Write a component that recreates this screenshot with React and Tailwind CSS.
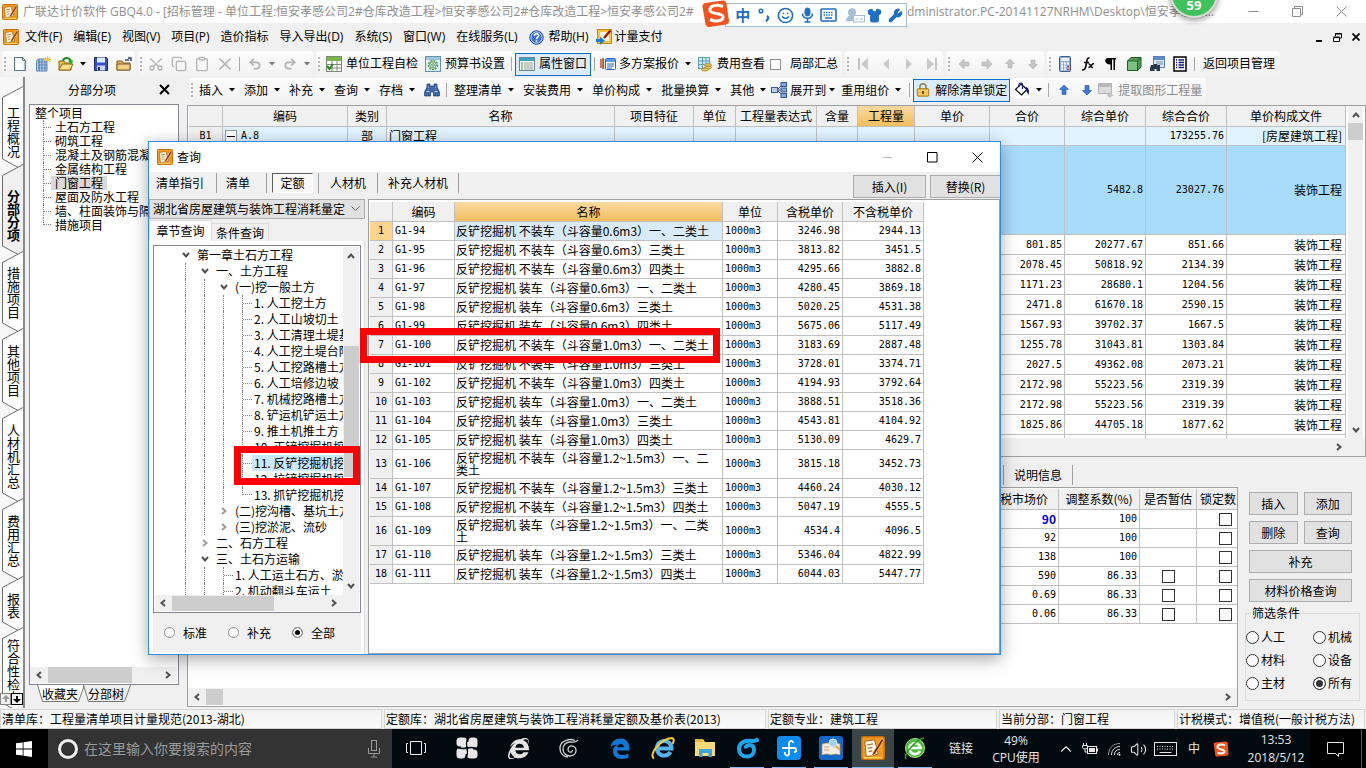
import React from "react";
import {
  Scissors, Copy, Clipboard, X, Undo2, Redo2, Mic, Keyboard, Smile, Shirt, Wrench,
  Volume2, ChevronUp, Minus, UserRound,
} from "lucide-react";
import { FaInternetExplorer } from "react-icons/fa";

/* ---------- small drawings ---------- */

function AppIcon({ size = 16 }) {
  return (
    <svg width={size} height={size} viewBox="0 0 16 16" className="shrink-0">
      <rect x="0.5" y="0.5" width="15" height="15" rx="1" fill="#f39a1d" stroke="#c96f0c" />
      <path d="M2.5 3.5 9 2.5l2.5 9.5-8 2z" fill="#fff8e2" stroke="#9b5a14" strokeWidth=".6" />
      <path d="M4 6l4-.8M4.5 8.2l3-.6M5 10.4l2.5-.5" stroke="#a8703a" strokeWidth=".8" />
      <path d="M14 1.5 8 11l-.8 2.4L9.4 12 15 3z" fill="#7b2a10" stroke="#ffe2a8" strokeWidth=".4" />
      <path d="M2 14.5h12" stroke="#ffd65e" />
    </svg>
  );
}

const I = ({ children, w = 16 }) => (
  <svg width={w} height={w} viewBox="0 0 16 16" fill="none" className="shrink-0">{children}</svg>
);

const icons = {
  doc: <I><path d="M2.500 1.500h8l3 3v10h-11z" fill="#fff" stroke="#5d7286" /><path d="M10.500 1.500v3h3" stroke="#5d7286" /><path d="M12.500 6v8" stroke="#a9c3dc" strokeWidth="1.500" /></I>,
  grid: <I><path d="M1.500 4.500 4 3v12H1.500zM4 3h8v12H4z" fill="#b7d0ec" stroke="#5c86b5" /><path d="M4 6h8M4 9h8M4 12h8M7 3v12M10 3v12" stroke="#4a76a8" strokeWidth=".8" /><path d="M12.500 0v7M9 3.500h7M10 1l5 5M15 1l-5 5" stroke="#f4c531" /></I>,
  open: <I><path d="M1 14V5h5l1 2h6v7z" fill="#f2c14e" stroke="#8a6410" /><path d="M1 14l3-6h11l-3 6z" fill="#ffe08a" stroke="#8a6410" /><path d="M5 5c1-4 6-4 8 0" stroke="#1e8a1e" strokeWidth="2" /><path d="M10 4.500h5.500L13 9z" fill="#2eb02e" /></I>,
  save: <I><path d="M1.500 1.500h12l1 1v12h-13z" fill="#3c4fc0" stroke="#1d2a7c" /><rect x="4" y="1.500" width="8" height="5" fill="#e4ebf8" /><rect x="4" y="9.500" width="8" height="5" fill="#cfd8ea" /><rect x="5" y="11" width="2" height="3.500" fill="#1d2a7c" /></I>,
  folder: <I><path d="M1 14V5h5l1.500 2H14v7z" fill="#dfb566" stroke="#7e5c1b" /><path d="M1 14V8h13v6z" fill="#f3cf85" stroke="#7e5c1b" /><path d="M9 4h4M12 2l3 0 0 3" stroke="#33496f" strokeWidth="1.500" /></I>,
  check: <I><rect x=".5" y=".5" width="15" height="15" fill="#fff" stroke="#7d8a7a" /><rect x="1" y="1" width="14" height="4" fill="#7ab648" /><path d="M1 8.500h14M1 12h14M6 5v10M11 5v10" stroke="#7d8a7a" /><path d="M1 10l2.500 3L7 8" stroke="#2d8b1d" strokeWidth="2" /></I>,
  gear: <I><rect x=".5" y=".5" width="15" height="15" fill="#dff0f8" stroke="#6692ab" /><rect x="1" y="1" width="14" height="3" fill="#9cc6de" /><circle cx="8" cy="9" r="4.500" stroke="#5e9b55" strokeWidth="1.500" strokeDasharray="2 1" /><circle cx="8" cy="9" r="3.200" stroke="#5e9b55" /><circle cx="8" cy="9" r="1.300" stroke="#5e9b55" /></I>,
  props: <I><rect x=".5" y="1.500" width="15" height="13" fill="#f4f6ee" stroke="#6d8595" /><rect x="1" y="2" width="14" height="3" fill="#37a3bd" /><path d="M5 7h9M5 9h9M5 11h9M5 13h9" stroke="#9aa39a" /><path d="M2 7h2M2 9h2M2 11h2M2 13h2" stroke="#3e9d55" /></I>,
  multi: <I><path d="M1 3v9M3 2v11" stroke="#d23b2b" strokeWidth="1.400" /><path d="M3.500 3v10" stroke="#2c9a39" strokeWidth="1.400" /><rect x="5.500" y="2.500" width="10" height="11" rx="1" fill="#fff" stroke="#2368c9" /><rect x="6" y="3" width="9" height="3" fill="#5b9be6" /><path d="M7 8h7M7 10h7M7 12h5" stroke="#2368c9" /></I>,
  fee: <I><rect x="1.500" y="1.500" width="11" height="11" fill="#cfe9f3" stroke="#5a9fbc" /><path d="M2 5h10M2 8.500h10M5.500 2v10M9 2v10" stroke="#5a9fbc" /><ellipse cx="11" cy="9" rx="3.500" ry="1.500" fill="#e9c25a" stroke="#97701a" strokeWidth=".6" /><ellipse cx="11" cy="11.500" rx="3.500" ry="1.500" fill="#e9c25a" stroke="#97701a" strokeWidth=".6" /><ellipse cx="8" cy="13.500" rx="3.500" ry="1.500" fill="#e9c25a" stroke="#97701a" strokeWidth=".6" /></I>,
  first: <I><path d="M4 2v12" stroke="#c4c4c4" strokeWidth="2" /><path d="M13 2v12L6 8z" fill="#c9c9c9" /></I>,
  prev: <I><path d="M11 2.500v11L5 8z" fill="#c9c9c9" /></I>,
  next: <I><path d="M5 2.500v11l6-5.500z" fill="#c9c9c9" /></I>,
  last: <I><path d="M12 2v12" stroke="#c4c4c4" strokeWidth="2" /><path d="M3 2v12l7-6z" fill="#c9c9c9" /></I>,
  left: <I><path d="M3 8l5-5v3h5v4H8v3z" fill="#c6c6c6" stroke="#b0b0b0" strokeWidth=".6" /></I>,
  right: <I><path d="M13 8 8 3v3H3v4h5v3z" fill="#c6c6c6" stroke="#b0b0b0" strokeWidth=".6" /></I>,
  up: <I><path d="M8 3l4.500 4.500H10V12H6V7.500H3.500z" fill="#c6c6c6" stroke="#b0b0b0" strokeWidth=".6" /></I>,
  down: <I><path d="M8 13l4.500-4.500H10V4H6v4.500H3.500z" fill="#c6c6c6" stroke="#b0b0b0" strokeWidth=".6" /></I>,
  upBlue: <I><path d="M8 3l4.500 4.500H10V12.500H6V7.500H3.500z" fill="#3f78e0" stroke="#2450a8" strokeWidth=".6" /></I>,
  downBlue: <I><path d="M8 13l4.500-4.500H10V3.500H6v5H3.500z" fill="#3f78e0" stroke="#2450a8" strokeWidth=".6" /></I>,
  calc: <I><rect x="2.500" y=".5" width="11" height="15" rx="1" fill="#8fb0dc" stroke="#3f5f92" /><rect x="4" y="2" width="8" height="3" fill="#e8f2ff" /><path d="M4 7.500h8M4 10.500h8M4 13.300h8" stroke="#fff" strokeWidth="1.800" strokeDasharray="2 1" /><path d="M10 10.500h2M10 13.300h2" stroke="#d1483b" strokeWidth="1.800" /></I>,
  fx: <I><path d="M9.500 2C7 1.500 7 4 6.300 8S5 14.500 2 14M4 6.500h5" stroke="#000" strokeWidth="1.600" /><path d="M8.500 8c2-1 2 4 4.500 3.500M14 7.500c-2.500 0-3 4-5.500 4" stroke="#000" strokeWidth="1.500" /></I>,
  para: <I><path d="M3 2h10v1.500h-1V14h-1.500V3.500H9V14H7.500V8.500C1 8.500 1 2 5 2z" fill="#000" /></I>,
  cube: <I><path d="M1.500 5 5 1.500h10V11l-3.500 3.500h-10z" fill="#4f9a55" stroke="#1f5b28" /><path d="M1.500 5h10v9.500M11.500 5 15 1.500" stroke="#1f5b28" /><path d="M2 5.500h9V14H2z" fill="#7cc381" /></I>,
  find: <I><rect x="4.500" y=".5" width="11" height="11" fill="#dfeafa" stroke="#5b7db8" /><rect x="5" y="1" width="10" height="3" fill="#5b8ad6" /><path d="M7 6h7M7 8h7" stroke="#6c87b5" /><path d="M2 9h3v-1h3v1h3v6H7.500v-2h-2v2H1v-3z" fill="#29394f" /></I>,
  list: <I><rect x="2" y="1" width="12" height="14" fill="#fff" stroke="#000" strokeWidth="1.500" /><path d="M4 4h1M4 6.500h1M4 9h1M4 11.500h1" stroke="#00f" strokeWidth="1.300" /><path d="M6.500 4H12M6.500 6.500H12M6.500 9H12M6.500 11.500H12" stroke="#111a7a" strokeWidth="1.300" /></I>,
  bino: <I><path d="M3 2h3v2h4V2h3v3l2.500 5v4h-6v-4h-3v4h-6v-4L3 5z" fill="#3e66a8" stroke="#1f3b6e" strokeWidth=".7" /><path d="M2.500 9.500h3M10.500 9.500h3M4 5h1M11 5h1" stroke="#b9d2f5" /></I>,
  expand: <I><path d="M6 8l5-5M6 8h5M6 8l5 5" stroke="#33496f" /><rect x=".5" y="5.500" width="6" height="5" fill="#b9d0f2" stroke="#38589a" /><rect x="10" y=".5" width="5.500" height="4" fill="#7fa6e4" stroke="#38589a" /><rect x="10" y="6" width="5.500" height="4" fill="#7fa6e4" stroke="#38589a" /><rect x="10" y="11.500" width="5.500" height="4" fill="#7fa6e4" stroke="#38589a" /></I>,
  lock: <I w={14}><path d="M4.500 7V4.500a3.500 3.500 0 0 1 7 0V7" stroke="#9b8a60" strokeWidth="2" /><rect x="1.500" y="6.500" width="13" height="8.500" rx="1" fill="#f4bd42" stroke="#a06c0c" /><path d="M2 9h12M2 12.500h12" stroke="#ffe39a" /><path d="M8 9v3.500" stroke="#5b3c05" strokeWidth="2" /></I>,
  bucket: <I><rect width="16" height="16" fill="#fff" /><path d="M1.500 7.500 7 2l6 5.500-5.500 5.500z" fill="#fff" stroke="#000" strokeWidth="1.200" /><path d="M5 5V2.500c0-2 3.500-2 3.500 0V7" stroke="#10107a" strokeWidth="1.200" /><path d="M12 5c3 1 3.500 4 2.500 8-1-1.500-2-4-2.500-5z" fill="#10107a" /></I>,
  extract: <I><rect x=".5" y="1.500" width="13" height="10" fill="#dcdcdc" stroke="#b5b5b5" /><rect x="1" y="2" width="12" height="3" fill="#b8b8b8" /><path d="M6 8c0 4 3 4 5 4v-2.500l4.500 4-4.500 2.500z" fill="#c4c4c4" /></I>,
  help: <I w={15}><circle cx="8" cy="8" r="7.200" fill="#3a70d6" stroke="#204a9c" /><circle cx="8" cy="8" r="6" stroke="#cfe0ff" /><path d="M5.800 6.200c0-3 4.600-2.800 4.400 0C10.100 7.600 8 7.800 8 9.800M8 11v1.600" stroke="#fff" strokeWidth="1.700" /></I>,
  pay: <I><rect x="1.500" y=".5" width="14" height="14" fill="#ffc53a" stroke="#cf8a10" /><rect x="4" y="3" width="9" height="9" fill="#fff6dd" /><path d="M14.500 1.500 8 9" stroke="#8c1a10" strokeWidth="2.400" /><path d="M0 10h4V7.500l5 4.200-5 4V13H0z" fill="#1c7fd0" /></I>,
};

function Chev({ dir, light }) {
  const d = { left: "M7 2 3.500 5 7 8", right: "M3 2l3.500 3L3 8", up: "M2 7l3-3.500L8 7", down: "M2 3l3 3.500L8 3" }[dir];
  return (
    <svg width="10" height="10" viewBox="0 0 10 10" className="shrink-0">
      <path d={d} fill="none" stroke={light ? "#a0a0a0" : "#505050"} strokeWidth="2" />
    </svg>
  );
}

const Caret = ({ gray }) => (
  <svg width="6" height="4" viewBox="0 0 6 4"><path d="M0 0h6L3 3.500z" fill={gray ? "#777" : "#000"} /></svg>
);

const Grip = () => (
  <span className="flex w-[6px] shrink-0 flex-col items-center gap-[2px]">
    {[0, 1, 2, 3].map((i) => <span key={i} className="h-[2px] w-[2px] bg-[#b4b4b4]" />)}
  </span>
);
const Sep = () => <span className="flex w-[7px] shrink-0 justify-center"><span className="h-[14px] w-px bg-[#a8a8a8]" /></span>;
const Slot = ({ label, children }) => (
  <button type="button" aria-label={label} className="flex h-5 w-[23px] shrink-0 items-center justify-center">{children}</button>
);
const CaretSlot = ({ gray }) => <span className="flex w-3 shrink-0 justify-center"><Caret gray={gray} /></span>;
const Group = ({ children }) => (
  <div className="flex h-full items-center rounded-[3px] bg-linear-to-b from-[#fdfdfd] to-[#f1f1f1]">{children}</div>
);

function Drop({ children }) {
  return (
    <button type="button" className="flex h-5 shrink-0 items-center whitespace-nowrap pl-1">
      {children}
      <span className="flex w-[17px] justify-center"><Caret /></span>
    </button>
  );
}

function PushButton({ children, className = "" }) {
  return (
    <button type="button" className={"flex h-[23px] items-center justify-center whitespace-nowrap border border-[#adadad] bg-[#e1e1e1] " + className}>
      {children}
    </button>
  );
}

/* ---------- window chrome ---------- */

function TitleBar() {
  return (
    <header className="flex h-[23px] shrink-0 items-center bg-white pl-[2px] text-[#8f8f8f]">
      <AppIcon />
      <p className="ml-[5px] w-[684px] shrink-0 overflow-hidden whitespace-nowrap">
        广联达计价软件 GBQ4.0 - [招标管理 - 单位工程:恒安孝感公司2#仓库改造工程&gt;恒安孝感公司2#仓库改造工程&gt;恒安孝感公司2#
      </p>
      <p className="ml-[200px] shrink-0 whitespace-nowrap">dministrator.PC-20141127NRHM\Desktop\恒安孝感公...</p>
      <div className="ml-auto flex items-center gap-[33px] pr-[19px]">
        <button type="button" aria-label="最小化"><svg width="11" height="11" stroke="#8f8f8f"><path d="M.5 5.500h10" /></svg></button>
        <button type="button" aria-label="还原">
          <svg width="11" height="11" viewBox="0 0 11 11" fill="none" stroke="#8f8f8f"><path d="M.5 2.500h8v8h-8zM2.500 2.500v-2h8v8h-2" /></svg>
        </button>
        <button type="button" aria-label="关闭">
          <svg width="11" height="11" viewBox="0 0 11 11" fill="none" stroke="#8f8f8f"><path d="M.5.5l10 10M10.500.5l-10 10" /></svg>
        </button>
      </div>
    </header>
  );
}

function MenuBar() {
  const menus = ["文件(F)", "编辑(E)", "视图(V)", "项目(P)", "造价指标", "导入导出(D)", "系统(S)", "窗口(W)", "在线服务(L)"];
  return (
    <nav className="flex h-7 shrink-0 items-center gap-[11px] pl-[3px]">
      <div className="flex items-center gap-[6px]"><AppIcon /><button type="button">{menus[0]}</button></div>
      {menus.slice(1).map((m) => <button type="button" key={m} className="whitespace-nowrap">{m}</button>)}
      <button type="button" className="flex items-center gap-[5px] whitespace-nowrap">{icons.help}帮助(H)</button>
      <button type="button" className="-ml-1 flex items-center gap-[3px] whitespace-nowrap">{icons.pay}计量支付</button>
      <div className="ml-auto flex items-center gap-[10px] pr-[6px]">
        <button type="button" aria-label="最小化子窗口"><svg width="8" height="9"><path d="M1 8h6" stroke="#000" strokeWidth="2" /></svg></button>
        <button type="button" aria-label="还原子窗口">
          <svg width="9" height="9" viewBox="0 0 9 9" fill="none" stroke="#000"><path d="M.5 4.500v4h6v-4zM.5 4h6M2.500 3V.5h6v4.500H7M2.500 1h6" /></svg>
        </button>
        <button type="button" aria-label="关闭子窗口">
          <svg width="8" height="8" viewBox="0 0 8 8" stroke="#000" strokeWidth="1.700"><path d="M.5.5l7 7M7.500.5l-7 7" /></svg>
        </button>
      </div>
    </nav>
  );
}

function MainToolbar() {
  const gray = { size: 16, color: "#b4b4b4", strokeWidth: 2 };
  return (
    <div className="flex h-[26px] shrink-0 items-center gap-[3px] pl-[2px]">
      <Group>
        <Grip />
        <Slot label="新建">{icons.doc}</Slot><Slot label="新建工程">{icons.grid}</Slot><Slot label="打开">{icons.open}</Slot>
        <CaretSlot /><Slot label="保存">{icons.save}</Slot><Slot label="关闭工程">{icons.folder}</Slot>
      </Group>
      <Group>
        <Grip />
        <Slot label="剪切"><Scissors {...gray} className="-rotate-90" /></Slot><Slot label="复制"><Copy {...gray} /></Slot>
        <Slot label="粘贴"><Clipboard {...gray} /></Slot><Slot label="删除"><X {...gray} size={20} /></Slot>
        <Sep />
        <Slot label="撤销"><Undo2 {...gray} size={14} strokeWidth={3} /></Slot><CaretSlot gray />
        <Slot label="重做"><Redo2 {...gray} size={14} strokeWidth={3} /></Slot><CaretSlot gray />
      </Group>
      <Group>
        <Grip />
        <button type="button" className="flex items-center gap-1 pl-1 whitespace-nowrap">{icons.check}单位工程自检</button>
        <button type="button" className="mr-[3px] flex items-center gap-1 pl-[7px] whitespace-nowrap">{icons.gear}预算书设置</button>
        <Sep />
        <button type="button" className="flex h-[23px] items-center gap-1 border border-[#0a6cc9] bg-[#dcebf8] px-[3px] whitespace-nowrap">{icons.props}属性窗口</button>
        <Sep />
        <button type="button" className="flex items-center gap-[3px] pl-[2px] whitespace-nowrap">{icons.multi}多方案报价</button>
        <span className="flex w-[18px] justify-center"><Caret /></span>
        <button type="button" className="flex items-center gap-1 whitespace-nowrap">{icons.fee}费用查看</button>
        <label className="flex items-center gap-[9px] pr-1 pl-[5px] whitespace-nowrap">
          <input type="checkbox" className="h-[11px] w-[11px] appearance-none border border-[#909090] bg-white" />局部汇总
        </label>
      </Group>
      <Group>
        <Grip />
        <Slot label="首行">{icons.first}</Slot><Slot label="上一行">{icons.prev}</Slot><Slot label="下一行">{icons.next}</Slot><Slot label="末行">{icons.last}</Slot>
      </Group>
      <Group>
        <Grip />
        <Slot label="左移">{icons.left}</Slot><Slot label="右移">{icons.right}</Slot><Slot label="上移">{icons.up}</Slot><Slot label="下移">{icons.down}</Slot>
      </Group>
      <Group>
        <Grip />
        <Slot label="计算器">{icons.calc}</Slot><Slot label="函数">{icons.fx}</Slot><Slot label="段落">{icons.para}</Slot>
        <Slot label="图元">{icons.cube}</Slot><Slot label="查找">{icons.find}</Slot><Slot label="列表">{icons.list}</Slot>
        <Sep />
        <button type="button" className="px-[5px] whitespace-nowrap">返回项目管理</button>
      </Group>
    </div>
  );
}

function EditToolbar() {
  return (
    <div className="flex h-[27px] shrink-0 items-center pb-[3px] pl-[2px]">
      <Group>
        <Grip />
        {["插入", "添加", "补充", "查询", "存档"].map((t) => <Drop key={t}>{t}</Drop>)}
        <Slot label="查找">{icons.bino}</Slot>
        <Sep />
        {["整理清单", "安装费用", "单价构成", "批量换算", "其他"].map((t) => <Drop key={t}>{t}</Drop>)}
        <button type="button" className="flex items-center gap-[3px] whitespace-nowrap">{icons.expand}展开到</button>
        <span className="flex w-[11px] justify-center"><Caret /></span>
        <Drop>重用组价</Drop>
        <Sep />
        <button type="button" className="flex h-[23px] items-center gap-[5px] border border-[#0a6cc9] bg-[#dcebf8] px-[2px] whitespace-nowrap">{icons.lock}解除清单锁定</button>
        <Slot label="填充">{icons.bucket}</Slot><CaretSlot />
        <Sep />
        <Slot label="上移">{icons.upBlue}</Slot><Slot label="下移">{icons.downBlue}</Slot>
        <button type="button" className="flex items-center gap-1 pr-1 whitespace-nowrap text-[#8a8a8a]">{icons.extract}提取图形工程量</button>
      </Group>
    </div>
  );
}

/* ---------- left side ---------- */

const sideTabs = [
  ["工程概况", "h-[78px] pt-[14px]", 78], ["分部分项", "h-[87px] pt-4 font-bold", 87], ["措施项目", "h-[77px] pt-[7px]", 77],
  ["其他项目", "h-[79px] pt-[7px]", 79], ["人材机汇总", "h-[91px] pt-2", 91], ["费用汇总", "h-[78px] pt-2", 78],
  ["报表", "h-[51px] pt-2", 51], ["符合性检查", "h-[81px] pt-2", 81],
];

function SideTabs() {
  return (
    <aside className="relative flex w-[25px] shrink-0 flex-col overflow-hidden border-r-2 border-[#8a8a8a] bg-[#f7f7f7] pt-[9px]">
      {sideTabs.map(([t, cls, h], i) => (
        <button type="button" key={t} className={"relative flex shrink-0 justify-center pl-[3px] text-[13px] leading-[14px] " + cls}>
          <svg width="23" height={h + 6} className="absolute top-0 left-0" fill={i === 1 ? "#f0f0f0" : "#fff"}>
            <path d={`M23 .5 2.500 11.500V${h - 5}L13.500 ${h + 1}L23 ${h + 6}`} stroke="#6d6d6d" />
          </svg>
          <span className="relative whitespace-nowrap [writing-mode:vertical-rl]">{t}</span>
        </button>
      ))}
      <div className="absolute bottom-[3px] left-0 flex">
        <button type="button" aria-label="上一页" className="flex h-3 w-[11px] items-center justify-center border border-[#888] bg-[#f0f0f0]">
          <svg width="8" height="8"><path d="M4 0l4 4H5v3H3V4H0z" fill="#999" /></svg>
        </button>
        <button type="button" aria-label="下一页" className="flex h-3 w-3 items-center justify-center border border-black bg-[#f0f0f0]">
          <svg width="8" height="8"><path d="M4 8l4-4H5V1H3v3H0z" fill="#000" /></svg>
        </button>
      </div>
    </aside>
  );
}

function PartsPanel() {
  const items = ["土石方工程", "砌筑工程", "混凝土及钢筋混凝土工程", "金属结构工程", "门窗工程", "屋面及防水工程", "墙、柱面装饰与隔断工程", "措施项目"];
  return (
    <section className="flex w-[162px] shrink-0 flex-col pr-2 pl-1">
      <div className="flex h-[27px] shrink-0 items-center justify-between pr-[9px] pb-[2px] pl-[39px]">
        <h2>分部分项</h2>
        <button type="button" aria-label="关闭面板">
          <svg width="11" height="11" viewBox="0 0 11 11" stroke="#000" strokeWidth="2"><path d="M1 1l9 9M10 1l-9 9" /></svg>
        </button>
      </div>
      <div className="flex min-h-0 flex-1 flex-col border border-[#828790] bg-white">
        <ul className="flex-1 overflow-hidden pt-px leading-[14px] whitespace-nowrap">
          <li className="pl-[5px]">整个项目</li>
          {items.map((t, i) => (
            <li key={t} className="flex h-[14px] pl-[13px]">
              <span className={"flex w-2 shrink-0 items-center border-l border-dotted border-[#808080] " + (i === items.length - 1 ? "h-[7px] items-end" : "")}>
                <span className="flex-1 border-t border-dotted border-[#808080]" />
              </span>
              <span className={i === 4 ? "bg-[#d9d9d9] px-1" : "px-1"}>{t}</span>
            </li>
          ))}
        </ul>
        <div className="mr-px mb-px flex h-4 items-center bg-[#f0f0f0] pl-1">
          <Chev dir="left" /><span className="ml-1 h-full w-[84px] bg-[#cdcdcd]" /><span className="flex-1" /><Chev dir="right" /><span className="w-1" />
        </div>
      </div>
      <div className="flex h-[23px] shrink-0 items-start pl-2">
        {["收藏夹", "分部树"].map((t, i) => (
          <button type="button" key={t} className="relative flex h-[17px] w-[46px] items-center justify-center">
            <svg width="48" height="17" className="absolute top-0 left-0" fill={i ? "#f0f0f0" : "#fff"} stroke="#777"><path d="M.5 0 5.500 16.500H41.500L47.500 0" /></svg>
            <span className="relative">{t}</span>
          </button>
        ))}
      </div>
    </section>
  );
}

/* ---------- main table ---------- */

const cell = "overflow-hidden border-r border-b border-[#c0c0c0] p-0 whitespace-nowrap";
const num = " pr-[2px] text-right font-['DejaVu_Sans_Mono',monospace] text-[10px]";

const priceRows = [
  ["801.85", "20277.67", "851.66"], ["2078.45", "50818.92", "2134.39"], ["1171.23", "28680.1", "1204.56"],
  ["2471.8", "61670.18", "2590.15"], ["1567.93", "39702.37", "1667.5"], ["1255.78", "31043.81", "1303.84"],
  ["2027.5", "49362.08", "2073.21"], ["2172.98", "55223.56", "2319.39"], ["2172.98", "55223.56", "2319.39"],
  ["1825.86", "44705.18", "1877.62"],
];

function MainTable() {
  const heads = ["", "编码", "类别", "名称", "项目特征", "单位", "工程量表达式", "含量", "工程量", "单价", "合价", "综合单价", "综合合价", "单价构成文件"];
  return (
    <div className="flex h-[352px] shrink-0 flex-col border border-[#a0a0a0] bg-white">
      <div className="flex min-h-0 flex-1">
        <div className="min-w-0 flex-1 overflow-hidden pl-px">
          <table className="w-full table-fixed border-separate border-spacing-0 leading-[14px]">
            <colgroup>
              <col className="w-[34px]" /><col className="w-[125px]" /><col className="w-[39px]" /><col /><col className="w-[79px]" />
              <col className="w-[42px]" /><col className="w-[81px]" /><col className="w-[41px]" /><col className="w-[57px]" />
              <col className="w-[75px]" /><col className="w-[75px]" /><col className="w-[81px]" /><col className="w-[81px]" /><col className="w-[119px]" />
            </colgroup>
            <thead>
              <tr className="h-[21px]">
                {heads.map((h, i) => (
                  <th key={i} className={cell + " font-normal " + (i === 8 ? "bg-linear-to-b from-[#f9d9a0] to-[#f2be5c]" : "bg-[#f0f0f0]")}>{h}</th>
                ))}
              </tr>
            </thead>
            <tbody>
              <tr className="h-[19px] bg-[#e1f3ff]">
                <td className={cell + " bg-[#f0f0f0] text-center font-['DejaVu_Sans_Mono',monospace] text-[10px]"}>B1</td>
                <td className={cell}>
                  <span className="flex items-center gap-1 pl-[2px] font-['DejaVu_Sans_Mono',monospace] text-[10px]">
                    <button type="button" aria-label="折叠" className="flex h-3 w-3 items-center justify-center border border-[#999] bg-white"><span className="h-px w-2 bg-black" /></button>
                    A.8
                  </span>
                </td>
                <td className={cell + " text-center"}>部</td>
                <td className={cell + " pl-[2px]"}>门窗工程</td>
                {[4, 5, 6, 7, 8, 9, 10, 11].map((k) => <td key={k} className={cell} />)}
                <td className={cell + num}>173255.76</td>
                <td className={cell + " pr-[3px] text-right"}>[房屋建筑工程]</td>
              </tr>
              <tr className="h-[89px] bg-[#a9dbfb]">
                {[0, 1, 2, 3, 4, 5, 6, 7, 8, 9, 10].map((k) => <td key={k} className={cell} />)}
                <td className={cell + num}>5482.8</td>
                <td className={cell + num}>23027.76</td>
                <td className={cell + " pr-[3px] text-right"}>装饰工程</td>
              </tr>
              {priceRows.map((r, i) => (
                <tr key={i} className="h-5">
                  {[0, 1, 2, 3, 4, 5, 6, 7, 8, 9].map((k) => <td key={k} className={cell} />)}
                  {r.map((v, k) => <td key={k} className={cell + num}>{v}</td>)}
                  <td className={cell + " pr-[3px] text-right"}>装饰工程</td>
                </tr>
              ))}
              <tr className="h-5">{heads.map((_, k) => <td key={k} className={cell} />)}</tr>
            </tbody>
          </table>
        </div>
        <div className="mr-[2px] ml-[2px] flex w-[15px] flex-col items-center bg-[#f0f0f0] pt-1 pb-[3px]">
          <Chev dir="up" /><span className="mt-[3px] h-[17px] w-full bg-[#cdcdcd]" /><span className="flex-1" /><Chev dir="down" />
        </div>
      </div>
      <div className="flex h-[18px] shrink-0 items-center bg-[#f0f0f0] pr-[21px] pl-1">
        <Chev dir="left" /><span className="flex-1" /><Chev dir="right" />
      </div>
    </div>
  );
}

/* ---------- lower pane ---------- */

const box = "block h-[13px] w-[13px] appearance-none border border-[#333] bg-white";
const radio = "h-[13px] w-[13px] shrink-0 appearance-none rounded-full border border-[#333] bg-white checked:bg-[#333] checked:shadow-[inset_0_0_0_2px_#fff]";

function LowerPane() {
  const rows = [["90", "100", false], ["92", "100", false], ["138", "100", false], ["590", "86.33", true], ["0.69", "86.33", true], ["0.06", "86.33", true]];
  return (
    <div className="flex min-h-0 flex-1 flex-col">
      <div className="flex h-[30px] shrink-0 items-center pt-[6px] pl-[816px]">
        <span className="h-5 w-px bg-[#a0a0a0]" />
        <button type="button" className="px-[10px] whitespace-nowrap">说明信息</button>
        <span className="h-5 w-px bg-[#a0a0a0]" />
      </div>
      <div className="flex min-h-0 flex-1">
        <div className="flex min-w-0 flex-1 flex-col border border-[#a0a0a0] bg-white">
          <div className="flex min-h-0 flex-1 justify-end overflow-hidden pt-px">
            <table className="h-fit w-full table-fixed border-separate border-spacing-0 leading-[14px]">
              <colgroup><col /><col className="w-[68px]" /><col className="w-[81px]" /><col className="w-[57px]" /><col className="w-[40px]" /></colgroup>
              <thead>
                <tr className="h-[21px] bg-[#f0f0f0]">
                  <th className={cell} />
                  <th className={cell + " text-left font-normal"}><span className="pl-[9px]">税市场价</span></th>
                  <th className={cell + " font-normal"}>调整系数(%)</th>
                  <th className={cell + " font-normal"}>是否暂估</th>
                  <th className="overflow-hidden border-b border-[#c0c0c0] p-0 pl-[3px] text-left font-normal whitespace-nowrap">锁定数</th>
                </tr>
              </thead>
              <tbody>
                {rows.map(([a, b, c], i) => (
                  <tr key={i} className="h-[19px]">
                    <td className={cell} />
                    <td className={cell + (i === 0 ? " pr-[2px] text-right font-bold text-[#0000e0]" : num)}>{a}</td>
                    <td className={cell + num}>{b}</td>
                    <td className={cell}>{c && <input type="checkbox" aria-label="是否暂估" className={box + " mx-auto"} />}</td>
                    <td className="border-b border-[#c0c0c0] p-0"><input type="checkbox" aria-label="锁定数量" className={box + " ml-[22px]"} /></td>
                  </tr>
                ))}
              </tbody>
            </table>
          </div>
          <div className="mb-px flex h-[17px] shrink-0 items-center bg-[#f0f0f0] pr-1 pl-1">
            <Chev dir="left" /><span className="ml-1 h-4 w-[17px] bg-[#cdcdcd]" /><span className="flex-1" /><Chev dir="right" />
          </div>
        </div>
        <div className="flex w-[128px] shrink-0 flex-col pt-[5px] pr-[6px] pl-[7px]">
          <div className="grid grid-cols-2 gap-x-[6px] gap-y-[6px] pr-2 pl-1">
            <PushButton>插入</PushButton><PushButton>添加</PushButton><PushButton>删除</PushButton><PushButton>查询</PushButton>
            <PushButton className="col-span-2">补充</PushButton>
            <PushButton className="col-span-2">材料价格查询</PushButton>
          </div>
          <fieldset className="mt-1 grid h-[95px] grid-cols-[67px_1fr] content-start gap-y-[7px] border border-[#dcdcdc] pt-[9px]">
            <legend className="ml-[5px] px-px leading-[14px]">筛选条件</legend>
            {["人工", "机械", "材料", "设备", "主材", "所有"].map((t) => (
              <label key={t} className="flex items-center gap-[2px] whitespace-nowrap">
                <input type="radio" name="filter" defaultChecked={t === "所有"} className={radio} />{t}
              </label>
            ))}
          </fieldset>
        </div>
      </div>
    </div>
  );
}

/* ---------- query dialog ---------- */

const tree = [
  [0, "open", "第一章土石方工程"], [1, "open", "一、土方工程"], [2, "open", "(一)挖一般土方"],
  [3, "leaf", "1. 人工挖土方"], [3, "leaf", "2. 人工山坡切土"], [3, "leaf", "3. 人工清理土堤基础"], [3, "leaf", "4. 人工挖土堤台阶"],
  [3, "leaf", "5. 人工挖路槽土方"], [3, "leaf", "6. 人工培修边坡"], [3, "leaf", "7. 机械挖路槽土方"], [3, "leaf", "8. 铲运机铲运土方"],
  [3, "leaf", "9. 推土机推土方"], [3, "leaf", "10. 正铲挖掘机挖土方"], [3, "leaf", "11. 反铲挖掘机挖土方"], [3, "leaf", "12. 拉铲挖掘机挖土方"],
  [3, "last", "13. 抓铲挖掘机挖土方"], [2, "shut", "(二)挖沟槽、基坑土方"], [2, "shut", "(三)挖淤泥、流砂"], [1, "shut", "二、石方工程"],
  [1, "open", "三、土石方运输"], [2, "leaf", "1. 人工运土石方、淤泥"], [2, "leaf", "2. 机动翻斗车运土"],
];

function TreeRow({ depth, kind, text }) {
  const leaf = kind === "leaf" || kind === "last";
  return (
    <li className="flex h-4 pl-[21px]">
      {Array.from({ length: depth }).map((_, k) => (
        <span key={k} className="flex w-[19px] shrink-0 pl-[9px]"><span className="border-l border-dotted border-[#808080]" /></span>
      ))}
      {leaf ? (
        <span className="flex w-[19px] shrink-0 pl-[9px]">
          <span className={"flex w-[10px] border-l border-dotted border-[#808080] " + (kind === "last" ? "h-2 items-end" : "items-center")}>
            <span className="flex-1 border-t border-dotted border-[#808080]" />
          </span>
        </span>
      ) : (
        <span className="flex w-[19px] shrink-0 items-center justify-center"><Chev dir={kind === "open" ? "down" : "right"} light={kind === "shut"} /></span>
      )}
      <span className={text.startsWith("11.") ? "flex-1 bg-[#cce8ff] pl-[2px]" : "pl-[2px]"}>{text}</span>
    </li>
  );
}

const J = "反铲挖掘机 ";
const quota = [
  ["94", J + "不装车（斗容量0.6m3）一、二类土", "3246.98", "2944.13"], ["95", J + "不装车（斗容量0.6m3）三类土", "3813.82", "3451.5"],
  ["96", J + "不装车（斗容量0.6m3）四类土", "4295.66", "3882.8"], ["97", J + "装车（斗容量0.6m3）一、二类土", "4280.45", "3869.18"],
  ["98", J + "装车（斗容量0.6m3）三类土", "5020.25", "4531.38"], ["99", J + "装车（斗容量0.6m3）四类土", "5675.06", "5117.49"],
  ["100", J + "不装车（斗容量1.0m3）一、二类土", "3183.69", "2887.48"], ["101", J + "不装车（斗容量1.0m3）三类土", "3728.01", "3374.71"],
  ["102", J + "不装车（斗容量1.0m3）四类土", "4194.93", "3792.64"], ["103", J + "装车（斗容量1.0m3）一、二类土", "3888.51", "3518.36"],
  ["104", J + "装车（斗容量1.0m3）三类土", "4543.81", "4104.92"], ["105", J + "装车（斗容量1.0m3）四类土", "5130.09", "4629.7"],
  ["106", J + "不装车（斗容量1.2~1.5m3）一、二\n类土", "3815.18", "3452.73"], ["107", J + "不装车（斗容量1.2~1.5m3）三类土", "4460.24", "4030.12"],
  ["108", J + "不装车（斗容量1.2~1.5m3）四类土", "5047.19", "4555.5"], ["109", J + "装车（斗容量1.2~1.5m3）一、二类\n土", "4534.4", "4096.5"],
  ["110", J + "装车（斗容量1.2~1.5m3）三类土", "5346.04", "4822.99"], ["111", J + "装车（斗容量1.2~1.5m3）四类土", "6044.03", "5447.77"],
];

function QuotaTable() {
  const mono = " pl-[2px] font-['DejaVu_Sans_Mono',monospace] text-[10px]";
  return (
    <table className="w-[554px] table-fixed border-separate border-spacing-0">
      <colgroup>
        <col className="w-[23px]" /><col className="w-[62px]" /><col className="w-[268px]" /><col className="w-[55px]" /><col className="w-[65px]" /><col className="w-[81px]" />
      </colgroup>
      <thead>
        <tr className="h-5 leading-[14px]">
          {["", "编码", "名称", "单位", "含税单价", "不含税单价"].map((h, i) => (
            <th key={i} className={cell + " font-normal " + (i === 2 ? "bg-linear-to-b from-[#f9d9a0] to-[#f2be5c]" : "bg-[#f0f0f0]")}>{h}</th>
          ))}
        </tr>
      </thead>
      <tbody>
        {quota.map(([c, n, a, b], i) => (
          <tr key={c} className={n.includes("\n") ? "h-[29px]" : "h-[19px]"}>
            <td className={cell + " text-center font-['DejaVu_Sans_Mono',monospace] text-[10px] " + (i === 0 ? "bg-[#ffd58d]" : "bg-[#f0f0f0]")}>{i + 1}</td>
            <td className={cell + mono}>{"G1-" + c}</td>
            <td className={"overflow-hidden border-r border-b border-[#c0c0c0] p-0 pl-px leading-3 whitespace-pre " + (i === 0 ? "bg-[#d9eaf9]" : "")}>{n}</td>
            <td className={cell + mono}>1000m3</td>
            <td className={cell + num}>{a}</td>
            <td className={cell + num}>{b}</td>
          </tr>
        ))}
      </tbody>
    </table>
  );
}

function QueryDialog() {
  const tabSep = <span className="h-5 w-px shrink-0 bg-[#a0a0a0]" />;
  return (
    <section role="dialog" aria-label="查询" className="absolute top-[141px] left-[148px] flex h-[514px] w-[853px] flex-col border border-[#2f8eea] bg-[#f0f0f0] shadow-[0_4px_16px_rgba(0,0,0,0.35)]">
      <div className="flex h-[30px] shrink-0 items-center bg-white pr-[17px] pl-2">
        <AppIcon /><h2 className="ml-1">查询</h2>
        <div className="ml-auto flex items-center gap-[34px]">
          <button type="button" aria-label="最小化"><svg width="11" height="11" stroke="#bdbdbd"><path d="M.5 5.500h10" /></svg></button>
          <button type="button" aria-label="最大化"><svg width="11" height="11" fill="none" stroke="#000"><path d="M.5.5h9.500v9.500H.5z" /></svg></button>
          <button type="button" aria-label="关闭"><svg width="11" height="11" viewBox="0 0 11 11" stroke="#000"><path d="M.5.5l10 10M10.500.5l-10 10" /></svg></button>
        </div>
      </div>
      <div className="flex h-[27px] shrink-0 items-start justify-between pl-[7px]">
        <div className="flex h-[21px] items-center whitespace-nowrap">
          <button type="button" className="pr-3">清单指引</button>{tabSep}
          <button type="button" className="pr-4 pl-[9px]">清单</button>{tabSep}
          <button type="button" className="mx-[5px] h-5 w-[41px] border border-t-[#606060] border-r-white border-b-white border-l-[#606060] bg-[#f8f8f8]">定额</button>{tabSep}
          <button type="button" className="px-[11px]">人材机</button>{tabSep}
          <button type="button" className="px-[10px]">补充人材机</button>{tabSep}
        </div>
        <div className="flex gap-1 pt-[3px]">
          <PushButton className="w-[73px]">插入(I)</PushButton>
          <PushButton className="w-[70px] border-r-0">替换(R)</PushButton>
        </div>
      </div>
      <div className="flex min-h-0 flex-1">
        <div className="flex w-[216px] shrink-0 flex-col">
          <div className="relative flex shrink-0 items-center">
            <select aria-label="定额库" className="h-5 w-full appearance-none overflow-hidden border border-[#adadad] bg-[#e1e1e1] pl-[3px] leading-[18px]"><option>湖北省房屋建筑与装饰工程消耗量定</option></select>
            <span className="pointer-events-none absolute right-[5px]">
              <svg width="9" height="6" fill="none" stroke="#606060"><path d="M.5.5l4 4 4-4" /></svg>
            </span>
          </div>
          <div className="flex h-[22px] shrink-0 items-end pt-px">
            <button type="button" className="h-[21px] w-[63px] border border-b-0 border-[#dcdcdc] bg-white">章节查询</button>
            <button type="button" className="h-[18px] w-[57px] border border-b-0 border-l-0 border-[#dcdcdc]">条件查询</button>
          </div>
          <div className="flex min-h-0 flex-1 flex-col border-r border-[#dcdcdc] bg-white pt-1 pb-[2px] pl-1">
            <div className="flex h-[368px] w-[208px] flex-col border border-[#828790] p-px">
              <div className="flex min-h-0 flex-1">
                <ul className="min-w-0 flex-1 overflow-hidden leading-4 whitespace-nowrap">
                  {tree.map(([d, k, t]) => <TreeRow key={d + t} depth={d} kind={k} text={t} />)}
                </ul>
                <div className="flex w-4 shrink-0 flex-col items-center bg-[#f0f0f0] pt-1 pb-1">
                  <Chev dir="up" /><span className="mt-[85px] h-[131px] w-[15px] bg-[#cdcdcd]" /><span className="flex-1" /><Chev dir="down" />
                </div>
              </div>
              <div className="flex h-4 shrink-0 items-center bg-[#f0f0f0] pr-5 pl-[3px]">
                <Chev dir="left" /><span className="ml-1 h-[15px] w-[102px] bg-[#cdcdcd]" /><span className="flex-1" /><Chev dir="right" />
              </div>
            </div>
            <div className="flex w-[208px] flex-1 items-center gap-[21px] bg-[#f0f0f0] pl-[11px]">
              {["标准", "补充", "全部"].map((t) => (
                <label key={t} className="flex items-center gap-2 whitespace-nowrap">
                  <input type="radio" name="scope" defaultChecked={t === "全部"} className="h-[11px] w-[11px] appearance-none rounded-full border border-[#909090] bg-white checked:bg-black checked:shadow-[inset_0_0_0_2px_#fff]" />
                  {t}
                </label>
              ))}
            </div>
          </div>
        </div>
        <div className="ml-[3px] min-w-0 flex-1 border border-[#a0a0a0] bg-white pt-[2px] pl-px">
          <QuotaTable />
        </div>
      </div>
    </section>
  );
}

/* ---------- overlays ---------- */

function ImeBar() {
  const c = "#1f6fc4";
  return (
    <div className="absolute top-0 left-[701px] flex">
      <svg width="30" height="28" viewBox="0 0 30 28" className="relative z-10">
        <path d="M4 3 22 .5q3 0 3.500 3L28 21q0 3-3 3.500L8 27q-3 0-3.500-3L1.500 7Q1 4 4 3z" fill="#f1541f" />
        <path d="M22 6.500C15 4 8 6 9 10.500c1 4 13 2 13 6.500 0 4-7 5-13 2.500" fill="none" stroke="#fff" strokeWidth="3" />
      </svg>
      <div className="-ml-[6px] mt-[3px] flex h-6 w-[182px] items-center border border-[#a9bfd6] bg-white pl-[6px]">
        <span className="w-[22px] text-center text-[15px] font-bold text-[#1f6fc4]">中</span>
        <span className="flex w-[22px] justify-center"><svg width="12" height="14" fill="none" stroke={c}><circle cx="3" cy="3" r="1.800" strokeWidth="1.500" /><path d="M9 8c2 1 1 4-1 5" strokeWidth="2.500" /></svg></span>
        <span className="flex w-[22px] justify-center"><Smile size={17} color={c} strokeWidth={2.2} /></span>
        <span className="flex w-[22px] justify-center">
          <svg width="13" height="16" viewBox="0 0 13 16" fill="none" stroke={c}><rect x="4" y="1" width="5" height="8" rx="2.500" fill={c} /><path d="M1.500 6.500c0 6.500 10 6.500 10 0M6.500 11.500V15M3.500 15h6" strokeWidth="1.600" /></svg>
        </span>
        <span className="flex w-[22px] justify-center">
          <svg width="17" height="14" viewBox="0 0 17 14" fill="none" stroke={c}><rect x="1" y="1" width="15" height="12" rx="1" strokeWidth="1.600" /><path d="M3.500 4.500h10M3.500 7h10" strokeWidth="1.500" strokeDasharray="1.500 1" /><path d="M5 10h7" strokeWidth="1.500" /></svg>
        </span>
        <span className="relative flex w-[26px] justify-center">
          <UserRound size={16} color="#a9bdd6" fill="#a9bdd6" />
          <svg width="12" height="8" className="absolute right-0 bottom-0" fill="#fff" stroke="#a9bdd6"><rect x=".5" y=".5" width="11" height="6.500" /><path d="M2.500 4h3M7 4h3" /></svg>
        </span>
        <span className="flex w-[20px] justify-center"><Shirt size={15} color={c} fill={c} /></span>
        <span className="flex w-[22px] justify-center"><Wrench size={15} color={c} fill={c} /></span>
      </div>
    </div>
  );
}

/* ---------- bottom bars ---------- */

function StatusBar() {
  const f = "flex min-w-0 items-center overflow-hidden border border-[#d5d5d5] bg-linear-to-b from-[#f3f3f3] to-[#fafafa] pl-px whitespace-nowrap ";
  return (
    <footer className="flex h-[21px] shrink-0 gap-[2px] pt-px pr-px">
      <p className={f + "w-[382px]"}>清单库：工程量清单项目计量规范(2013-湖北)</p>
      <p className={f + "w-[382px]"}>定额库：湖北省房屋建筑与装饰工程消耗量定额及基价表(2013)</p>
      <p className={f + "w-[229px]"}>定额专业：建筑工程</p>
      <p className={f + "w-[176px]"}>当前分部：门窗工程</p>
      <p className={f + "flex-1"}>计税模式：增值税(一般计税方法)</p>
    </footer>
  );
}

function Task({ label, children, state = "w-[42px] border-transparent" }) {
  return (
    <button type="button" aria-label={label} className={"flex h-10 shrink-0 items-center justify-center border-b-2 " + state}>
      {children}
    </button>
  );
}

function Taskbar() {
  const run = "mx-1 w-[34px] border-[#83b9f5]";
  return (
    <footer className="flex h-10 shrink-0 items-center bg-[#010b0f] font-['Open_Sans','Noto_Sans_CJK_SC',sans-serif] text-[#e6e6e6]">
      <button type="button" aria-label="开始" className="flex h-10 w-12 shrink-0 items-center justify-center bg-black">
        <svg width="16" height="16" viewBox="0 0 16 16" fill="#fff"><path d="M0 2.300 6.700 1.400v6.200H0zM7.500 1.300 16 0v7.600H7.500zM0 8.400h6.700v6.200L0 13.700zM7.500 8.400H16V16l-8.500-1.300z" /></svg>
      </button>
      <label className="flex h-10 w-[344px] shrink-0 items-center bg-[#333] pr-3 pl-[10px]">
        <span className="h-5 w-5 shrink-0 rounded-full border-[3px] border-[#eee]" />
        <input aria-label="搜索" placeholder="在这里输入你要搜索的内容" className="ml-[6px] min-w-0 flex-1 bg-transparent text-[14px] placeholder:text-[#9a9a9a]" />
        <svg width="12" height="18" viewBox="0 0 12 18" fill="none" stroke="#999"><rect x="3.500" y=".5" width="5" height="10" /><path d="M.5 8v5.500h11V8M6 13.500v3.500M3 17h6" /></svg>
      </label>
      <div className="flex w-[250px] shrink-0 items-center justify-between pr-px pl-[3px]">
        <Task label="任务视图">
          <svg width="22" height="16" fill="none" stroke="#eee"><path d="M5.500 1.500h11v13h-11zM3 3.500H1.500v9H3M19 3.500h1.500v9H19" /></svg>
        </Task>
        <Task label="风扇">
          <svg width="22" height="22" viewBox="0 0 22 22" fill="#e8e8e8">
            <rect x=".5" y=".5" width="10.500" height="9" rx="3.500" /><rect x="12.500" y=".5" width="9" height="10.500" rx="3.500" />
            <rect x="11" y="12.500" width="10.500" height="9" rx="3.500" /><rect x=".5" y="11" width="9" height="10.500" rx="3.500" />
            <path d="M5 5h7v7H5zM10 5h7v7h-7zM10 10h7v7h-7zM5 10h7v7H5z" />
            <path d="M11 11C6 12 2 11 .5 9.500M11 11c-1-5 0-9 1.500-10.500M11 11c5-1 9 0 10.500 1.500M11 11c1 5 0 9-1.500 10.500" fill="none" stroke="#010b0f" strokeWidth="1.300" />
            <circle cx="11" cy="11" r="1.600" fill="#010b0f" />
          </svg>
        </Task>
        <Task label="浏览器"><FaInternetExplorer size={21} color="#e6e6e6" /></Task>
        <Task label="广联达">
          <svg width="20" height="20" viewBox="0 0 20 20" fill="none" stroke="#cfcfcf" strokeWidth="1.300">
            <path d="M19 2c-2 3-4 2-8 2-4 0-7 3-7 7s3 7 7 7 6.500-3 6-6.500c-.5-3-4-4.500-6.500-3-2 1.500-2 4.500 0 5.500 2 .6 3-.5 3-2" />
            <path d="M16 2.500C12 .5 1 1.500 1 10.500 1 15 4 19 9 19" />
          </svg>
        </Task>
        <Task label="Edge">
          <svg width="20" height="21" viewBox="0 0 20 21" fill="#0f78d4"><path d="M.5 9.500C1.500 3.500 5.500.5 10.500.5c6 0 9.500 4.500 9 12H7c.2 3 2.500 4.500 5.500 4.500 2.300 0 4.300-.6 6-1.600v4.200c-2 1-4.200 1.400-6.500 1.400-5.500 0-9-3.200-9-7.700 0-3 1.600-5.200 4.200-6.500C3.500 6.800 1.500 8 .5 9.500zM7.200 9.300h6.600c0-2.200-1.100-3.400-3.200-3.400-2 0-3.200 1.300-3.400 3.400z" /></svg>
        </Task>
      </div>
      <div className="flex shrink-0 items-center">
        <Task label="IE">
          <svg width="24" height="24" viewBox="0 0 24 24" fill="none"><path d="M19.500 16a7.300 7.300 0 1 1 1-3.500H7" stroke="#57b4f1" strokeWidth="4" /><path d="M3 22.500c-6-4 7-20 18-20.500 3 1 1.500 4 .5 6" stroke="#f6cd35" strokeWidth="2" /></svg>
        </Task>
        <Task label="文件夹">
          <svg width="22" height="20" viewBox="0 0 22 20"><path d="M1 1h8l2 3h10v14H1z" fill="#fbd977" /><path d="M1 1h8v3H1z" fill="#e9b93e" /><path d="M5 19v-8h13v8h-3.500v-4h-6v4z" fill="#3ba6e6" /></svg>
        </Task>
        <Task label="广联达云" state={run}>
          <svg width="24" height="24" viewBox="0 0 24 24" fill="none"><path d="M23.500 3c-3 3-5 2-9 1.800C9 4.500 4 7.500 4 13c0 4.500 3.500 7.500 8 7.500s7-3 7-6.500-2-5-4.500-5-4 1.500-4 3.500" stroke="#1ca4ef" strokeWidth="4" /></svg>
        </Task>
        <Task label="加密锁" state={run}>
          <svg width="24" height="24" viewBox="0 0 24 24" fill="none"><rect width="24" height="24" rx="4" fill="#0d8cf0" /><path d="M12 19V8c0-4 4-4 4-1M5 12h12c3 0 3 4 0 4M12 18c-1 3-5 1-4-2" stroke="#fff" strokeWidth="1.800" /></svg>
        </Task>
        <Task label="阅读" state={run}>
          <svg width="24" height="24" viewBox="0 0 24 24"><rect width="24" height="24" rx="3" fill="#1568c8" /><path d="M3 8q5-2 9 0 4-2 9 0v11q-5-2-9 0-4-2-9 0z" fill="#f5efe2" stroke="#b18b50" strokeWidth=".7" /><path d="M5 11h5M5 14h5M14 11h5" stroke="#d59a83" /><circle cx="14" cy="7" r="4" fill="#9fd0f3" stroke="#d8ecfb" /><path d="M17 10l4 4" stroke="#e8a53a" strokeWidth="2" /></svg>
        </Task>
        <Task label="计价软件" state="w-[42px] border-[#83b9f5] bg-[#3a4548]"><AppIcon size={24} /></Task>
        <Task label="浏览器快捷方式" state={run}>
          <svg width="24" height="24" viewBox="0 0 24 24" fill="none"><circle cx="12" cy="12" r="9.500" fill="#4cbf3a" stroke="#a3e38f" /><path d="M17 15a5.500 5.500 0 1 1 .5-3H7" stroke="#fff" strokeWidth="2.600" /><path d="M3 23C0 18 14 3 21 2" stroke="#2f9a2a" strokeWidth="1.500" /></svg>
        </Task>
      </div>
      <span className="ml-[13px] shrink-0">链接</span>
      <p className="ml-[17px] w-[52px] shrink-0 text-center leading-[17px] whitespace-nowrap">49%<br />CPU使用</p>
      <div className="flex shrink-0 items-center pl-3">
        <span className="flex w-[24px] justify-center"><ChevronUp size={18} strokeWidth={1.500} /></span>
        <span className="flex w-[24px] justify-center">
          <svg width="17" height="14" viewBox="0 0 17 14" fill="none" stroke="#e6e6e6"><rect x="5.500" y="4.500" width="9" height="7" /><path d="M15.500 6.500v3M1.500 1v3M4.500 1v3M.5 3.500h5v2q0 1.500-2.500 1.500t-2.500-1.500zM3 7v3h2" /><path d="M7 6h6v4H7z" fill="#e6e6e6" stroke="none" /></svg>
        </span>
        <span className="flex w-[24px] justify-center">
          <svg width="14" height="14" viewBox="0 0 14 14" fill="none" stroke="#e6e6e6"><path d="M1.500 13C1.500 6 6 1.500 13 1.500" stroke="#999" /><path d="M4.500 13C4.500 8 8 4.500 13 4.500M7.500 13c0-3.500 2-5.500 5.500-5.500M10.500 13c0-1.700.8-2.500 2.500-2.500" /><circle cx="12.500" cy="12.800" r="1" fill="#e6e6e6" stroke="none" /></svg>
        </span>
        <span className="flex w-[24px] justify-center"><Volume2 size={17} strokeWidth={1.500} /></span>
        <span className="flex w-[30px] justify-center">
          <svg width="23" height="14" viewBox="0 0 23 14" fill="none" stroke="#e6e6e6"><rect x=".5" y=".5" width="22" height="13" /><path d="M3 4.500h17M3 7h17" strokeDasharray="1 1.500" /><path d="M5.500 10.500h12" /></svg>
        </span>
        <span className="w-[28px] text-center">中</span>
        <span className="flex w-[26px] justify-center">
          <svg width="16" height="16" viewBox="0 0 16 16"><path d="M2 1.500 13 .5q1.500 0 1.700 1.500L15.500 13q0 1.500-1.500 1.700L4 15.500q-1.500 0-1.700-1.500L.8 3Q.7 1.700 2 1.500z" fill="#f1541f" /><path d="M12 4.500C8 2.500 4 4 4.500 6.500c.5 2 7 1.500 7 4 0 2-4 2.500-7 1.200" fill="none" stroke="#fff" strokeWidth="2" /></svg>
        </span>
      </div>
      <p className="ml-2 w-[68px] shrink-0 text-center leading-[18px]">13:53<br />2018/5/12</p>
      <button type="button" aria-label="通知" className="flex h-10 flex-1 items-center justify-center bg-black">
        <svg width="17" height="17" viewBox="0 0 17 17" fill="none" stroke="#e6e6e6"><path d="M.5 1.500h16v11h-5v3l-3-3h-8z" /></svg>
      </button>
      <span className="h-10 w-px bg-[#555]" /><span className="h-10 w-1 bg-black" />
    </footer>
  );
}

export default function App() {
  return (
    <div className="relative flex min-h-screen flex-col overflow-hidden bg-[#f0f0f0] font-['Open_Sans','Noto_Sans_CJK_SC',sans-serif] text-[12px] leading-4 text-black">
      <TitleBar />
      <MenuBar />
      <MainToolbar />
      <div className="flex min-h-[630px] flex-1 font-['Noto_Sans_CJK_SC',sans-serif]">
        <SideTabs />
        <PartsPanel />
        <main className="flex min-w-0 flex-1 flex-col pt-px pb-px">
          <EditToolbar />
          <MainTable />
          <LowerPane />
        </main>
      </div>
      <div className="flex flex-col font-['Noto_Sans_CJK_SC',sans-serif]"><StatusBar /></div>
      <Taskbar />

      <div className="font-['Noto_Sans_CJK_SC',sans-serif]"><QueryDialog /></div>
      <div className="pointer-events-none absolute top-[328px] left-[360px] h-[35px] w-[360px] border-[7px] border-[#fe0000]" />
      <div className="pointer-events-none absolute top-[446px] left-[234px] h-[39px] w-[126px] border-[7px] border-[#fe0000]" />
      <ImeBar />
      <div className="absolute -top-[30px] left-[1170px] flex h-12 w-12 items-end justify-center rounded-full border-2 border-[#d5ddd6] bg-[#3fc25c] pb-[3px] text-[13px] font-bold text-white shadow-[0_2px_6px_rgba(0,0,0,0.45)]">59</div>
    </div>
  );
}
